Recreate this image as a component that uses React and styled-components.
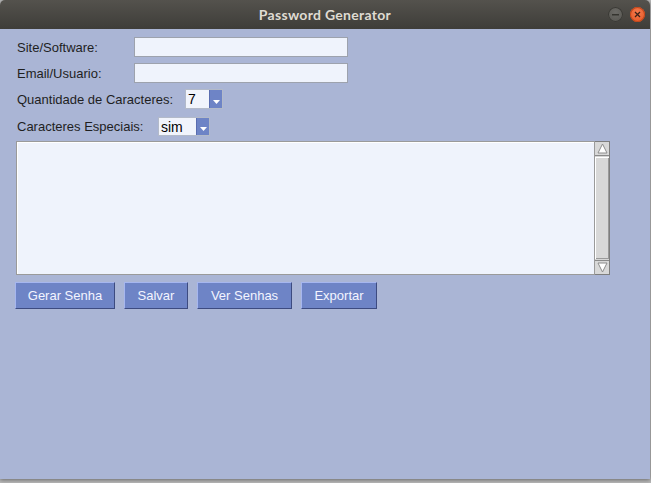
import React from 'react';
import styled, { createGlobalStyle } from 'styled-components';

const Global = createGlobalStyle`
html, body {
  margin: 0;
  padding: 0;
  background: #b9b9b9;
}
#root {
  width: 651px;
  height: 483px;
}
`;

const Frame = styled.div`
width: 650px;
height: 479px;
display: flex;
flex-direction: column;
box-shadow: 0 1px 4px rgba(0, 0, 0, 0.45);
border-radius: 5px 5px 0 0;
overflow: hidden;`

const TitleBar = styled.div`
height: 29px;
flex: none;
position: relative;
display: flex;
align-items: center;
justify-content: center;
background: linear-gradient(#54524d, #3e3d39);
color: #dfdbd2;
font: bold 14px Lato, "Open Sans", sans-serif;
letter-spacing: 0.3px;`

const Controls = styled.div`
position: absolute;
right: 5px;
top: 7px;
display: flex;
gap: 7px;`

const Dot = styled.div`
width: 15px;
height: 15px;
border-radius: 50%;
display: flex;
align-items: center;
justify-content: center;
background: ${p => p.$close ? 'radial-gradient(circle at 50% 35%, #f47a4e, #e2531f)' : 'radial-gradient(circle at 50% 35%, #6b6a66, #55544f)'};
box-shadow: inset 0 0 0 1px ${p => p.$close ? '#c1461b' : '#3a3935'};`

const Body = styled.div`
flex: 1;
background: #aab5d5;
padding: 8px 0 0 16px;
display: flex;
flex-direction: column;
font: 13px "Liberation Sans", Arial, sans-serif;
color: #1f1f1f;`

const Row = styled.div`
display: flex;
align-items: center;
height: ${p => p.$h}px;
margin-bottom: ${p => p.$gap}px;`

const Label = styled.div`
width: ${p => p.$w}px;
padding-left: 1px;
box-sizing: border-box;
white-space: nowrap;`

const Field = styled.div`
width: 214px;
height: 20px;
box-sizing: border-box;
border: 1px solid #9da2ad;
background: #eff3fc;`

const Combo = styled.div`
width: ${p => p.$w}px;
height: ${p => p.$h}px;
box-sizing: border-box;
border: 1px solid #b3bac9;
background: #f1f4fc;
display: flex;
align-items: stretch;`

const ComboText = styled.div`
flex: 1;
display: flex;
align-items: center;
padding-left: 2px;
font-size: 14px;
color: #000;`

const ComboButton = styled.div`
width: 12px;
background: #6e84c6;
border-left: 1px solid #5a6db0;
display: flex;
align-items: flex-end;
justify-content: center;
padding-bottom: 3px;`

const TextRow = styled.div`
display: flex;
height: 134px;
margin-bottom: 7px;`

const TextArea = styled.div`
width: 579px;
box-sizing: border-box;
border: 1px solid #9a9a9a;
box-shadow: inset 1px 1px 0 #ffffff;
background: #eff3fc;`

const ScrollBar = styled.div`
width: 15px;
box-sizing: border-box;
border: 1px solid #7e7e7e;
border-left-width: 0;
background: #d6d6d6;
display: flex;
flex-direction: column;`

const ArrowBox = styled.div`
height: 13px;
flex: none;
background: #d8d8d8;
display: flex;
align-items: center;
justify-content: center;
border-${p => p.$down ? 'top' : 'bottom'}: 1px solid #8a8a8a;`

const Thumb = styled.div`
flex: 1;
background: #d8d8d8;
box-shadow: inset 1px 1px 0 #ffffff, inset -1px -1px 0 #9a9a9a;
margin: 1px 0;`

const Buttons = styled.div`
display: flex;
gap: 9px;
margin-left: -1px;`

const Button = styled.div`
width: ${p => p.$w}px;
height: 27px;
box-sizing: border-box;
display: flex;
align-items: center;
justify-content: center;
background: #6e84c6;
color: #f3f4ff;
border-top: 1px solid #a6b6ef;
border-left: 1px solid #a6b6ef;
border-right: 1px solid #3d4b80;
border-bottom: 1px solid #3d4b80;`

const DownArrow = () => (
  <svg width="7" height="5" viewBox="0 0 7 5">
    <path d="M0 0h7L3.5 4z" fill="#ffffff" />
  </svg>
);

const ScrollArrow = ({ down }) => (
  <svg width="11" height="11" viewBox="0 0 11 11">
    <path
      d={down ? 'M1 1h9L5.5 10z' : 'M5.5 1L10 10H1z'}
      fill="#ffffff"
      stroke="#8c8c8c"
      strokeWidth="1"
    />
  </svg>
);

export default function App() {
  return (
    <>
      <Global />
      <Frame>
        <TitleBar>
          Password Generator
          <Controls>
            <Dot>
              <svg width="7" height="2"><rect width="7" height="1.5" fill="#35342f" /></svg>
            </Dot>
            <Dot $close>
              <svg width="7" height="7" viewBox="0 0 7 7">
                <path d="M1 1L6 6M6 1L1 6" stroke="#3b2218" strokeWidth="1.3" />
              </svg>
            </Dot>
          </Controls>
        </TitleBar>
        <Body>
          <Row $h={20} $gap={6}>
            <Label $w={118}>Site/Software:</Label>
            <Field />
          </Row>
          <Row $h={20} $gap={6}>
            <Label $w={118}>Email/Usuario:</Label>
            <Field />
          </Row>
          <Row $h={20} $gap={8}>
            <Label $w={169}>Quantidade de Caracteres:</Label>
            <Combo $w={38} $h={20}>
              <ComboText>7</ComboText>
              <ComboButton><DownArrow /></ComboButton>
            </Combo>
          </Row>
          <Row $h={19} $gap={5}>
            <Label $w={142}>Caracteres Especiais:</Label>
            <Combo $w={52} $h={19}>
              <ComboText>sim</ComboText>
              <ComboButton><DownArrow /></ComboButton>
            </Combo>
          </Row>
          <TextRow>
            <TextArea />
            <ScrollBar>
              <ArrowBox><ScrollArrow /></ArrowBox>
              <Thumb />
              <ArrowBox $down><ScrollArrow down /></ArrowBox>
            </ScrollBar>
          </TextRow>
          <Buttons>
            <Button $w={100}>Gerar Senha</Button>
            <Button $w={64}>Salvar</Button>
            <Button $w={95}>Ver Senhas</Button>
            <Button $w={76}>Exportar</Button>
          </Buttons>
        </Body>
      </Frame>
    </>
  );
}
